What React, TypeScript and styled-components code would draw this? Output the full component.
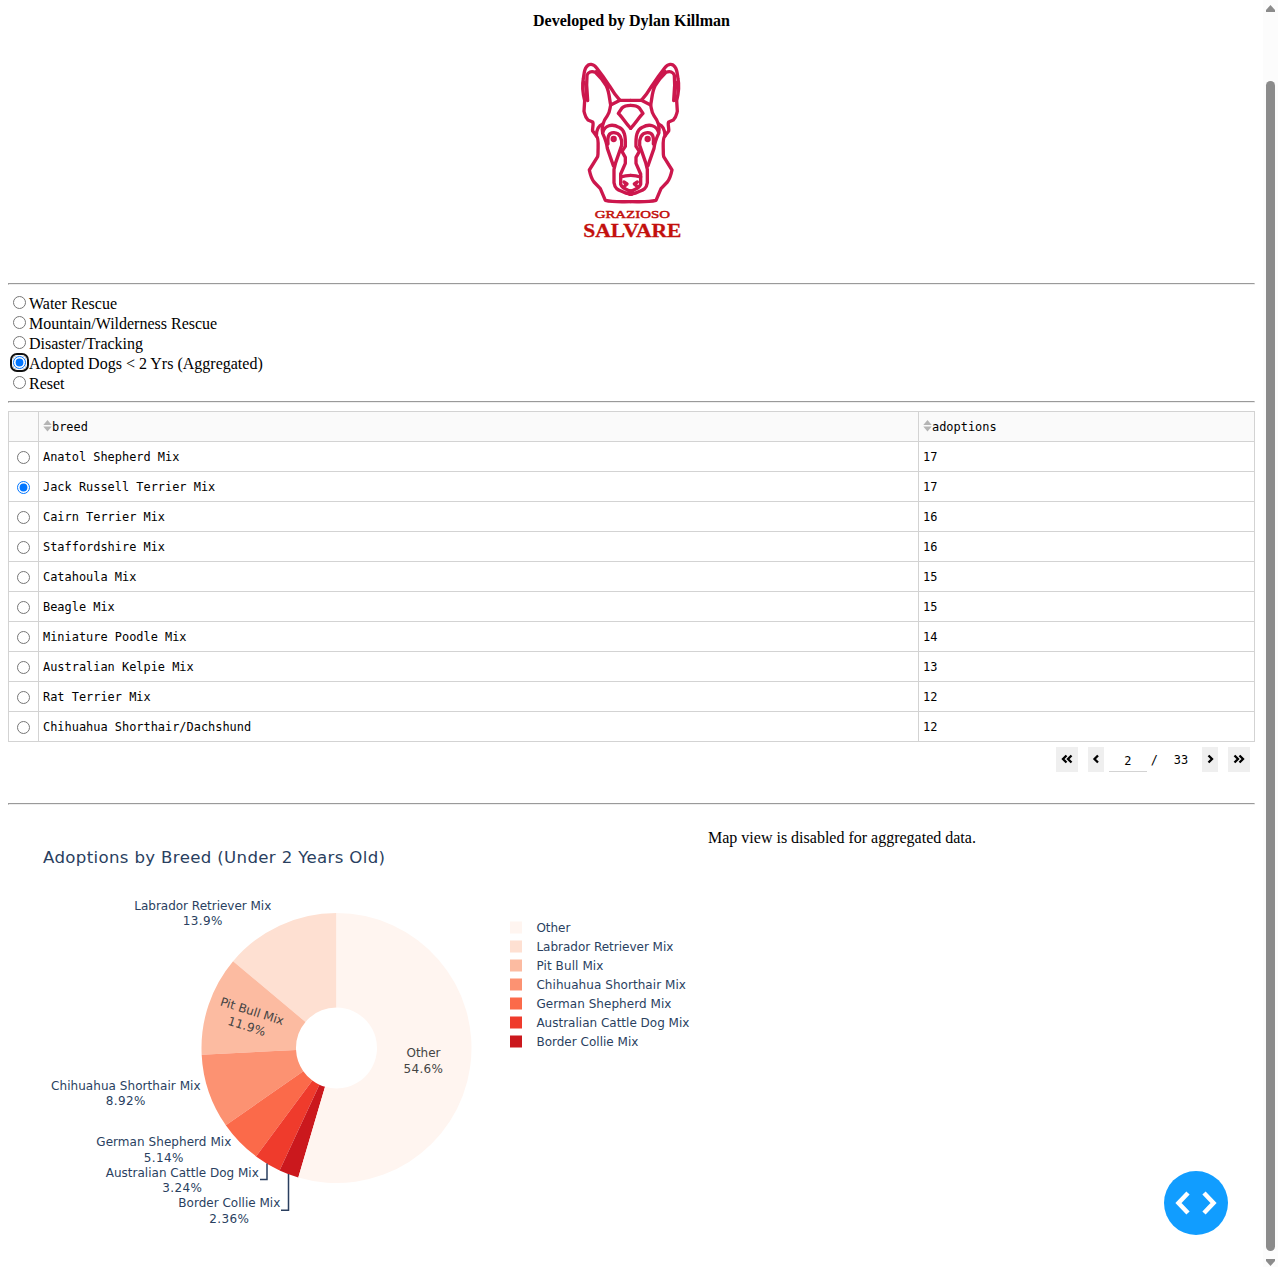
import React, { useState } from "react";
import styled, { createGlobalStyle, css } from "styled-components";

const GlobalStyle = createGlobalStyle`
  body {
    margin: 0;
    background: #fff;
    color: #000;
    font: 16px/20px "Liberation Serif", "Times New Roman", serif;
  }
`;

const Shell = styled.div`
  display: flex;
  height: 1267px;
  overflow: hidden;
`;

const Page = styled.main`
  flex: 1;
  padding: 0 8px;
`;

const Header = styled.header`
  display: flex;
  flex-direction: column;
  align-items: center;
  height: 283px;
`;

const Byline = styled.b`
  margin-top: 11px;
  height: 20px;
`;

const Logo = styled.svg`
  margin: 19px 0 0 1px;
  width: 124px;
  height: 200px;
`;

const Rule = styled.hr`
  margin: 0;
  height: 0;
  border: 1px solid;
  border-color: #9a9a9a #eee #eee #9a9a9a;
`;

const FilterList = styled.div`
  display: flex;
  flex-direction: column;
  padding: 9px 0 7px;
`;

const FilterLabel = styled.label`
  display: flex;
  height: 20px;
  white-space: nowrap;
`;

const RadioFrame = styled.span<{ $ring: boolean }>`
  display: flex;
  flex: none;
  width: 13px;
  height: 13px;
  margin: 2px 3px 0 5px;
  border-radius: 4px;
  ${(p) =>
    p.$ring &&
    css`
      box-shadow: 0 0 0 1px #fff, 0 0 0 3px #101010;
    `}
`;

const Radio = styled.input`
  width: 13px;
  height: 13px;
  margin: 0;
`;

const Table = styled.table`
  width: 100%;
  margin-top: 8px;
  border-collapse: collapse;
  table-layout: fixed;
  font: 11.93px/15px "DejaVu Sans Mono", monospace;
`;

const Cell = styled.td<{ $head?: boolean; $pick?: boolean }>`
  box-sizing: border-box;
  height: 30px;
  padding: ${(p) => (p.$pick ? "0" : p.$head ? "0 4px" : "2px 4px 0")};
  border: 1px solid #d3d3d3;
  background: ${(p) => (p.$head ? "#fafafa" : "#fff")};
  text-align: left;
  vertical-align: middle;
  line-height: ${(p) => (p.$pick ? 0 : "15px")};
`;

const RowRadio = styled.input`
  width: 13px;
  height: 13px;
  margin: 2px 0 0 8px;
`;

const HeadLabel = styled.span`
  display: flex;
  align-items: center;
  height: 15px;
  padding-top: 1px;
`;

const SortGlyph = styled.svg`
  flex: none;
  width: 9px;
  height: 12px;
  margin-top: -3px;
  fill: #b5b5b5;
`;

const Pager = styled.nav`
  display: flex;
  justify-content: flex-end;
  height: 25px;
  margin: 5px 5px 31px 0;
  font: 11.93px/25px "DejaVu Sans Mono", monospace;
`;

const PagerButton = styled.button<{ $wide?: boolean }>`
  display: grid;
  place-items: center;
  width: ${(p) => (p.$wide ? 22 : 16)}px;
  height: 25px;
  padding: 0;
  border: 0;
  background: #efefef;
`;

const PagerGlyph = styled.svg`
  height: 12px;
  margin-top: -2px;
  fill: none;
  stroke: #000;
  stroke-width: 2.3;
`;

const PageNumber = styled.span`
  width: 38px;
  height: 24px;
  margin: 0 4px 0 5px;
  border-bottom: 1px solid #d3d3d3;
  line-height: 28px;
  text-align: center;
`;

const PageTotal = styled.span`
  width: 32px;
  margin: 0 5px 0 9px;
  line-height: 27px;
  text-align: center;
`;

const Slash = styled.span`
  line-height: 27px;
  margin-right: -2px;
`;

const Spacer = styled.i<{ $w: number }>`
  width: ${(p) => p.$w}px;
`;

const Lower = styled.section`
  display: flex;
`;

const Chart = styled.svg`
  flex: none;
  width: 700px;
  height: 440px;
  font-family: "DejaVu Sans", Verdana, sans-serif;
  font-size: 12px;
  fill: #2a3f5f;
`;

const Aside = styled.aside`
  display: flex;
  flex: 1;
  flex-direction: column;
  justify-content: space-between;
  height: 430px;
`;

const MapNote = styled.p`
  margin: 23px 0 0;
`;

const DebugButton = styled.button`
  display: grid;
  place-items: center;
  align-self: flex-end;
  width: 64px;
  height: 64px;
  margin-right: 27px;
  padding: 0;
  border: 0;
  border-radius: 50%;
  background: #119dff;
`;

const ScrollTrack = styled.div`
  display: flex;
  flex-direction: column;
  align-items: center;
  width: 15px;
  background: #fcfcfc;
`;

const ScrollThumb = styled.div`
  width: 9px;
  height: 1170px;
  margin: 69px 0 8px;
  border-radius: 5px;
  background: #8b8b8b;
`;

const Arrow = styled.svg`
  flex: none;
  width: 9px;
  height: 7px;
  fill: #8b8b8b;
`;

const UpArrow = styled(Arrow)`
  margin-top: 5px;
`;

const filters = [
  "Water Rescue",
  "Mountain/Wilderness Rescue",
  "Disaster/Tracking",
  "Adopted Dogs < 2 Yrs (Aggregated)",
  "Reset",
];

const breeds: [string, number][] = [
  ["Anatol Shepherd Mix", 17],
  ["Jack Russell Terrier Mix", 17],
  ["Cairn Terrier Mix", 16],
  ["Staffordshire Mix", 16],
  ["Catahoula Mix", 15],
  ["Beagle Mix", 15],
  ["Miniature Poodle Mix", 14],
  ["Australian Kelpie Mix", 13],
  ["Rat Terrier Mix", 12],
  ["Chihuahua Shorthair/Dachshund", 12],
];

type Slice = { name: string; pct: number; color: string; width: number };
const slices: Slice[] = [
  { name: "Other", pct: 54.6, color: "#fff5f0", width: 34 },
  { name: "Labrador Retriever Mix", pct: 13.9, color: "#fee0d2", width: 137 },
  { name: "Pit Bull Mix", pct: 11.9, color: "#fcbba1", width: 67 },
  { name: "Chihuahua Shorthair Mix", pct: 8.92, color: "#fc9272", width: 149.5 },
  { name: "German Shepherd Mix", pct: 5.14, color: "#fb6a4a", width: 135 },
  { name: "Australian Cattle Dog Mix", pct: 3.24, color: "#ef3b2c", width: 153 },
  { name: "Border Collie Mix", pct: 2.36, color: "#cb181d", width: 102 },
];

const CX = 336.5;
const CY = 1048;
const R = 135;
const HOLE = 40.5;

const point = (radius: number, turn: number) => {
  const a = turn * Math.PI * 2;
  return `${CX - radius * Math.sin(a)} ${CY - radius * Math.cos(a)}`;
};

const ring = (from: number, to: number) => {
  const large = to - from > 0.5 ? 1 : 0;
  return `M${point(R, from)}A${R} ${R} 0 ${large} 0 ${point(R, to)}L${point(HOLE, to)}A${HOLE} ${HOLE} 0 ${large} 1 ${point(HOLE, from)}Z`;
};

const labels = [
  { i: 0, x: 423.5, y: 1057, gap: 16 },
  { i: 1, x: 202.8, y: 910, gap: 15 },
  { i: 3, x: 125.8, y: 1090, gap: 15 },
  { i: 4, x: 163.8, y: 1146, gap: 16 },
  { i: 5, x: 182.3, y: 1177, gap: 15 },
  { i: 6, x: 229.3, y: 1207, gap: 16 },
];

function Donut() {
  const total = slices.reduce((s, d) => s + d.pct, 0);
  let turn = 0;
  const order = [...slices.slice(1), slices[0]];
  return (
    <Chart viewBox="8 805 700 440">
      <text x="43" y="863" fontSize="16.6" textLength="342">
        Adoptions by Breed (Under 2 Years Old)
      </text>
      {order.map((d) => {
        const from = turn;
        turn += d.pct / total;
        return <path key={d.name} d={ring(from, turn)} fill={d.color} />;
      })}
      {labels.map((l) => {
        const s = slices[l.i];
        return (
          <g key={s.name} fill={l.i === 0 ? "#444" : "#2a3f5f"}>
            <text x={l.x - s.width / 2} y={l.y} textLength={s.width}>{s.name}</text>
            <text x={l.x - 20} y={l.y + l.gap} textLength={39.5}>{s.pct}%</text>
          </g>
        );
      })}
      <g transform="translate(250 1018) rotate(17.5)" fill="#444">
        <text x="-33" y="-3" textLength="66">Pit Bull Mix</text>
        <text x="-20" y="13" textLength="39">11.9%</text>
      </g>
      <g fill="none" stroke="#2a3f5f" strokeWidth="1.5">
        <path d="M267 1163.500V1179.500H260" />
        <path d="M288.500 1174V1210.300H281" />
      </g>
      {slices.map((s, i) => (
        <g key={s.name}>
          <rect x="510" y={921.5 + i * 19} width="12" height="12" fill={s.color} />
          <text x="536.4" y={932 + i * 19} textLength={s.width}>{s.name}</text>
        </g>
      ))}
    </Chart>
  );
}

function HalfFace() {
  return (
    <>
      <path d="M182 151H150C138 138 128 124 118 107L98 78L80 54C70 41 57 39 49 51C42 60 42 74 40 86C36 106 38 128 44 152L42 184C45 194 45 202 54 210L68 216C72 222 66 236 68 243L80 259C87 266 84 283 84 312L83 320L58 360C61 375 65 387 72 396L91 416L106 451C130 457 151 455 182 455" />
      <path d="M122 165C118 145 118 126 109 108C99 91 89 79 76 67C64 62 54 66 51 76L50 105L53 152" />
      <path d="M44 95L48 150M78 62L102 90L117 113" strokeWidth="5" />
      <path d="M150 151L122 165C119 178 120 187 112 197C98 215 95 236 98 250C105 265 110 278 112 295L130 347" />
      <path d="M98 222C83 228 79 244 79 258" />
      <path d="M98 248C104 226 126 220 147 232C164 240 167 258 166 289L156 304L166 322V340L152 372V403C156 415 166 417 182 424" />
      <path d="M114 282C112 260 116 247 132 248C150 249 157 266 155 286L137 338L132 358V398C136 423 151 420 167 429L182 432" />
      <circle cx="131" cy="267" r="4.500" />
      <path d="M182 166C170 166 162 168 156 174L145 190C154 197 164 216 182 235" />
      <path d="M152 381Q166 376 182 376M162 396L171 402L164 408" />
    </>
  );
}

function BrandLogo() {
  return (
    <Logo viewBox="0 0 372 600">
      <g fill="none" stroke="#cc174d" strokeWidth="10" strokeLinejoin="round" strokeLinecap="round">
        <HalfFace />
        <g transform="translate(364 0) scale(-1 1)">
          <HalfFace />
        </g>
        <circle cx="182" cy="428" r="5" />
      </g>
      <g fill="#c3100d" stroke="#c3100d" fontFamily="Liberation Serif, serif">
        <text x="74" y="503" fontSize="34" textLength="226" lengthAdjust="spacingAndGlyphs" strokeWidth="1.4">GRAZIOSO</text>
        <text x="40" y="560" fontSize="55" fontWeight="bold" textLength="294" lengthAdjust="spacingAndGlyphs" strokeWidth="0.8">SALVARE</text>
      </g>
    </Logo>
  );
}

function SortIcon() {
  return (
    <SortGlyph viewBox="0 0 9 12">
      <path d="M4.500 0L8.700 5H.3ZM.3 6.500H8.700L4.500 11.500Z" />
    </SortGlyph>
  );
}

function Chevron({ d, w = 12 }: { d: string; w?: number }) {
  return (
    <PagerGlyph width={w} viewBox={`0 0 ${w} 12`}>
      <path d={d} />
    </PagerGlyph>
  );
}

export default function App() {
  const [filter, setFilter] = useState(3);
  const [row, setRow] = useState(1);
  return (
    <Shell>
      <GlobalStyle />
      <Page>
        <Header>
          <Byline>Developed by Dylan Killman</Byline>
          <BrandLogo />
        </Header>
        <Rule />
        <FilterList>
          {filters.map((f, i) => (
            <FilterLabel key={f}>
              <RadioFrame $ring={filter === i}>
                <Radio type="radio" name="filter" checked={filter === i} onChange={() => setFilter(i)} />
              </RadioFrame>
              {f}
            </FilterLabel>
          ))}
        </FilterList>
        <Rule />
        <Table>
          <colgroup>
            <col style={{ width: 30 }} />
            <col style={{ width: 880 }} />
            <col />
          </colgroup>
          <thead>
            <tr>
              <Cell as="th" $head />
              {["breed", "adoptions"].map((h) => (
                <Cell key={h} $head>
                  <HeadLabel><SortIcon />{h}</HeadLabel>
                </Cell>
              ))}
            </tr>
          </thead>
          <tbody>
            {breeds.map(([breed, count], i) => (
              <tr key={breed}>
                <Cell $pick>
                  <RowRadio type="radio" name="row" checked={row === i} onChange={() => setRow(i)} />
                </Cell>
                <Cell>{breed}</Cell>
                <Cell>{count}</Cell>
              </tr>
            ))}
          </tbody>
        </Table>
        <Pager>
          <PagerButton $wide><Chevron d="M5.500 2.500L2 6L5.500 9.500M10.500 2.500L7 6L10.500 9.500" /></PagerButton>
          <Spacer $w={10} />
          <PagerButton><Chevron w={8} d="M6 2.500L2.500 6L6 9.500" /></PagerButton>
          <PageNumber>2</PageNumber>
          <Slash>/</Slash>
          <PageTotal>33</PageTotal>
          <PagerButton><Chevron w={8} d="M2.500 2.500L6 6L2.500 9.500" /></PagerButton>
          <Spacer $w={10} />
          <PagerButton $wide><Chevron d="M1.500 2.500L5 6L1.500 9.500M6.500 2.500L10 6L6.500 9.500" /></PagerButton>
        </Pager>
        <Rule />
        <Lower>
          <Donut />
          <Aside>
            <MapNote>Map view is disabled for aggregated data.</MapNote>
            <DebugButton>
              <svg width="44" height="26" viewBox="0 0 44 26" fill="none" stroke="#fff" strokeWidth="4.500">
                <path d="M14 3L4.500 13L14 23M30 3L39.500 13L30 23" />
              </svg>
            </DebugButton>
          </Aside>
        </Lower>
      </Page>
      <ScrollTrack>
        <UpArrow viewBox="0 0 9 7"><path d="M4.500 0L9 5V7H0V5Z" /></UpArrow>
        <ScrollThumb />
        <Arrow viewBox="0 0 9 7"><path d="M0 0H9V2L4.500 7L0 2Z" /></Arrow>
      </ScrollTrack>
    </Shell>
  );
}
